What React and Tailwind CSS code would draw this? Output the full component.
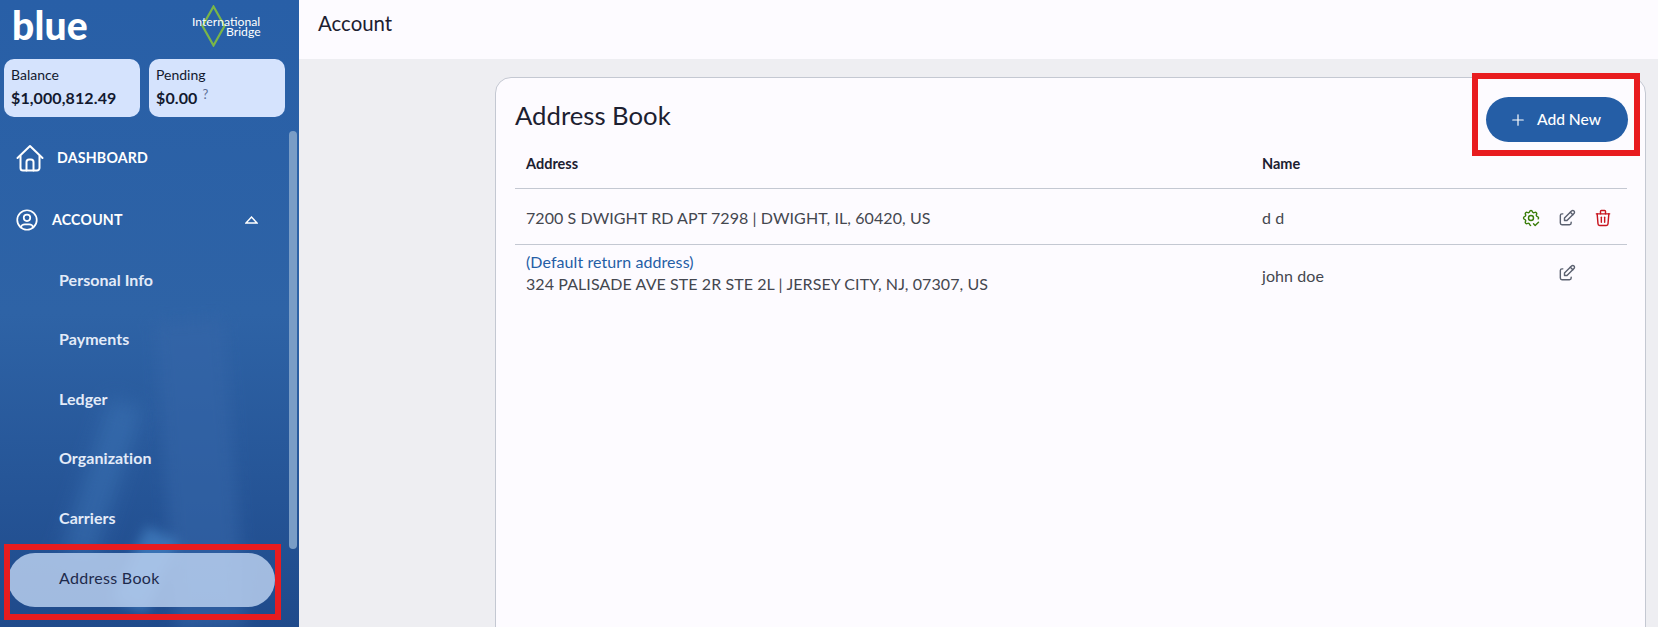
import { Plus } from "lucide-react";
import { TbSettingsCheck, TbEdit, TbTrash, TbUserCircle } from "react-icons/tb";

const subItems = ["Personal Info", "Payments", "Ledger", "Organization", "Carriers"];

function HomeIcon() {
  return (
    <svg width="28" height="28" viewBox="0 0 28 28" fill="none" stroke="white" strokeWidth="2" strokeLinejoin="round" strokeLinecap="round">
      <path d="M1.5 14 14 2l12.5 12" />
      <path d="M4.5 12v12a2.5 2.5 0 0 0 2.5 2.5h14a2.5 2.5 0 0 0 2.5-2.5V12" />
      <path d="M10.5 26.5V18a2.5 2.5 0 0 1 2.5-2.5h2a2.5 2.5 0 0 1 2.5 2.5v8.5" />
    </svg>
  );
}

function Stat({ label, value, extra, width }) {
  return (
    <div className={`h-[58px] ${width} rounded-[10px] bg-[#d5e3fd] pl-[7px] pt-[7px] text-[#12192f]`}>
      <div className="text-[14px] leading-[18px]">{label}</div>
      <div className="mt-[3px] flex text-[16px] font-bold leading-[22px] tracking-[0.1px]">
        {value}
        {extra && <span className="ml-[5px] text-[13px] font-normal leading-[14px] text-[#5c6f96]">{extra}</span>}
      </div>
    </div>
  );
}

function Sidebar() {
  return (
    <aside className="relative z-0 flex h-[627px] w-[299px] shrink-0 flex-col overflow-hidden bg-gradient-to-b from-[#285fa7] via-[#2e63a6] to-[#1f4a8b]">
      {/* photo behind the menu */}
      <div className="absolute left-[85px] top-[400px] -z-10 h-[160px] w-[34px] rotate-[18deg] bg-[#3d76b8]/50 blur-[10px]" />
      <div className="absolute left-[165px] top-[320px] -z-10 h-[310px] w-[70px] rotate-[-4deg] bg-[#3566a8]/60 blur-[8px]" />
      <div className="absolute left-[128px] top-[530px] -z-10 h-[80px] w-[36px] rotate-[25deg] bg-[#4a88cc]/60 blur-[6px]" />

      <div className="flex h-[59px] shrink-0 items-start justify-between pl-[12px] pr-[37px]">
        <span className="text-[39px] font-black leading-[50px] tracking-[0.2px] text-white">blue</span>
        <div className="relative mt-[5px] h-[42px] w-[70px] text-[12.2px] leading-[13px] text-white">
          <svg className="absolute left-[9px] top-0" width="25" height="42" viewBox="0 0 25 42" fill="none">
            <path d="M12.5 1.5 23.5 21 12.5 40.5 1.5 21Z" stroke="#7ab648" strokeWidth="2.2" />
          </svg>
          <div className="absolute left-0 top-[10px]">International</div>
          <div className="absolute left-[34px] top-[20px]">Bridge</div>
        </div>
      </div>

      <div className="flex shrink-0 gap-[9px] pl-[4px]">
        <Stat label="Balance" value="$1,000,812.49" width="w-[136px]" />
        <Stat label="Pending" value="$0.00" extra="?" width="w-[136px]" />
      </div>

      <nav className="mt-[10px] text-white">
        <div className="flex h-[62px] items-center gap-[13px] pl-[16px]">
          <HomeIcon />
          <span className="text-[14.2px] font-bold tracking-[0.2px]">DASHBOARD</span>
        </div>
        <div className="flex h-[62px] items-center pl-[14px] pr-[41px]">
          <TbUserCircle size={26} strokeWidth={1.6} />
          <span className="ml-[12px] flex-1 text-[14.2px] font-bold tracking-[0.2px]">ACCOUNT</span>
          <svg width="13" height="8" viewBox="0 0 13 8" fill="none" stroke="white" strokeWidth="1.4">
            <path d="M6.5 1 12 7H1Z" />
          </svg>
        </div>
        <ul className="-mt-[1px] text-[16px] font-bold text-[#e3ebf8]">
          {subItems.map((item) => (
            <li key={item} className="flex h-[59.5px] items-center pl-[59px] tracking-[0.05px]">{item}</li>
          ))}
          <li className="ml-[8px] mt-[5px] flex h-[54px] w-[267px] items-center rounded-[27px] bg-[#b9cfee]/85 pb-[3px] pl-[51px] font-normal tracking-[0.3px] text-[#1e2a4c]">
            Address Book
          </li>
        </ul>
      </nav>

      {/* scrollbar thumb */}
      <div className="absolute left-[289px] top-[131px] h-[418px] w-[8px] rounded-full bg-[#7a9dc6]" />
    </aside>
  );
}

export default function App() {
  return (
    <div className="relative flex h-[627px] w-[1658px] overflow-hidden bg-[#eeeef2] font-['Lato',sans-serif]">
      <Sidebar />
      <main className="flex min-w-0 flex-1 flex-col">
        <header className="flex h-[59px] shrink-0 items-center bg-[#fdfbff] pb-[12px] pl-[19px] text-[20.4px] text-[#1c2030]">Account</header>
        <div className="flex-1 pl-[196px] pr-[12px] pt-[18px]">
          <section className="h-[600px] rounded-[16px] border border-[#c4c8d2] bg-[#fdfbff] pl-[19px] pr-[18px]">
            <div className="flex h-[64px] justify-between">
              <h2 className="pt-[19px] text-[25.7px] leading-[36px] text-[#1c2030]">Address Book</h2>
              <button className="ml-auto mr-[-1px] mt-[19px] flex h-[45px] w-[142px] items-center justify-center gap-[10px] rounded-full bg-[#255ea6] pr-[4px] text-[15.6px] font-medium text-white">
                <Plus size={18} strokeWidth={1.6} />
                Add New
              </button>
            </div>
            <div className="grid h-[47px] grid-cols-[747px_1fr_131px] items-center border-b border-[#c4c8d2] pb-[2px] text-[14.5px] font-bold text-[#1c2030]">
              <div className="pl-[11px]">Address</div>
              <div>Name</div>
            </div>
            <div className="text-[16px] tracking-[0.08px] text-[#44474f]">
              <div className="grid h-[56px] grid-cols-[747px_1fr_131px] items-center border-b border-[#c4c8d2] pt-[2px]">
                <div className="pl-[11px]">7200 S DWIGHT RD APT 7298 | DWIGHT, IL, 60420, US</div>
                <div>d d</div>
                <div className="flex items-center justify-end gap-[16px] pr-[14px]">
                  <TbSettingsCheck size={20} strokeWidth={1.7} className="text-[#3a7d0a]" />
                  <TbEdit size={20} strokeWidth={1.7} className="text-[#5b6170]" />
                  <TbTrash size={20} strokeWidth={1.7} className="text-[#c8141e]" />
                </div>
              </div>
              <div className="grid grid-cols-[747px_1fr_131px] pt-[6px]">
                <div className="pl-[11px] leading-[22px]">
                  <div className="text-[#255ea6]">(Default return address)</div>
                  <div>324 PALISADE AVE STE 2R STE 2L | JERSEY CITY, NJ, 07307, US</div>
                </div>
                <div className="flex items-center pt-[6px]">john doe</div>
                <div className="flex justify-end pr-[50px] pt-[12px]">
                  <TbEdit size={20} strokeWidth={1.7} className="text-[#5b6170]" />
                </div>
              </div>
            </div>
          </section>
        </div>
      </main>

      {/* red annotation boxes */}
      <div className="absolute left-[4px] top-[544px] h-[76px] w-[277px] border-[6px] border-[#e81c1f]" />
      <div className="absolute left-[1472px] top-[73px] h-[83px] w-[168px] border-[6px] border-[#e81c1f]" />
    </div>
  );
}
